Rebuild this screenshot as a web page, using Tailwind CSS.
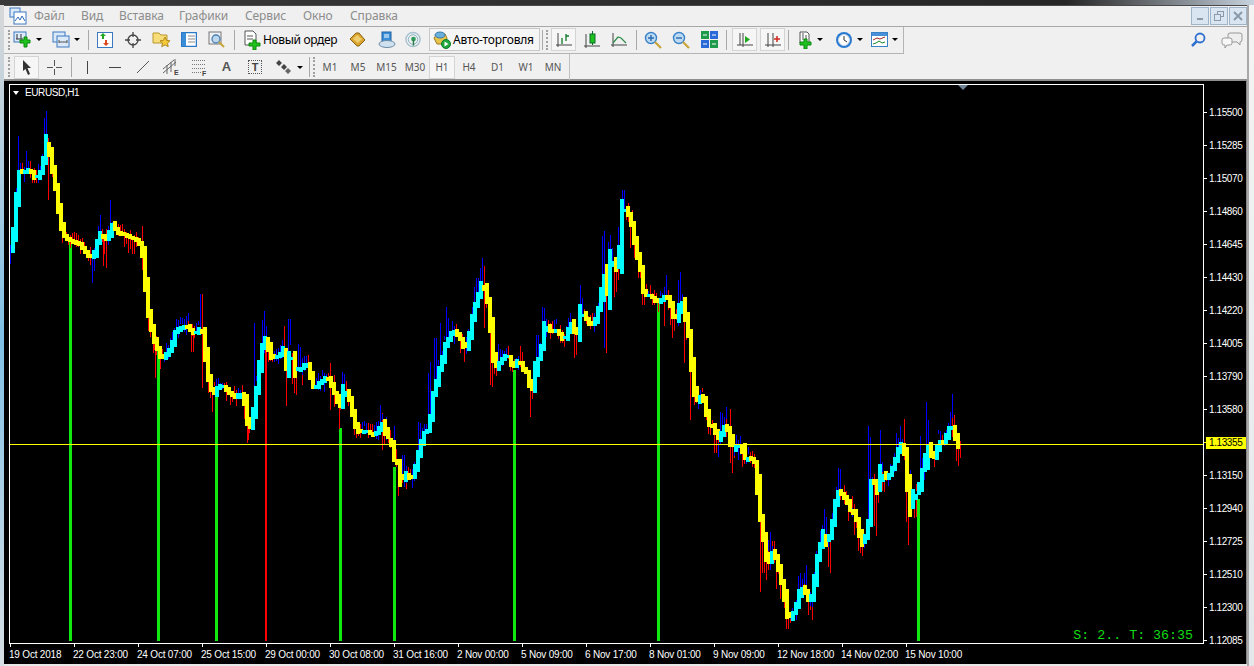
<!DOCTYPE html>
<html lang="en">

<head>
    <meta charset="UTF-8">
    <title>MetaTrader - EURUSD,H1</title>
    <script src="https://cdn.jsdelivr.net/npm/@tailwindcss/browser@4"></script>
</head>

<body class="w-[1254px] h-[666px] overflow-hidden bg-[#dfe6ec] font-['Noto_Sans',sans-serif]">
    <!-- desktop strip above the window -->
    <div class="h-[5px] bg-gradient-to-r from-[#3a3a3a] via-[#262626] via-85% to-[#c8d4e0]"></div>

    <div class="flex h-[661px]">
        <!-- left glass edge -->
        <div class="w-[4px] bg-gradient-to-b from-[#d8d8d8] via-[#7fc0e6] to-[#d8e0e4]"></div>

        <div class="w-[1243px] flex flex-col bg-[#f0f0f0] border-t border-[#4a4a4a]">
            <!-- menu bar -->
            <div class="h-[20px] flex items-center border-b border-[#a8a8a8] box-content relative">
                <svg class="ml-[5px] w-[18px] h-[18px]" viewBox="0 0 18 18">
                    <rect x="1" y="1" width="10" height="9" fill="#dbe9f8" stroke="#3a78c0" />
                    <rect x="5" y="5" width="12" height="12" fill="#fff" stroke="#3a78c0" />
                    <path d="M6 14l3-4 2 3 2-4 3 5" fill="none" stroke="#2b6cb8" />
                </svg>
                <div class="flex ml-[7px] gap-[18px] text-[12px] tracking-[-0.1px] text-[#8c8c8c]">
                    <span class="w-[29px]">Файл</span>
                    <span class="w-[20px]">Вид</span>
                    <span class="w-[42px]">Вставка</span>
                    <span class="w-[48px]">Графики</span>
                    <span class="w-[40px]">Сервис</span>
                    <span class="w-[29px]">Окно</span>
                    <span>Справка</span>
                </div>
                <div class="absolute right-0 top-[1px] flex gap-[1px]">
                    <div class="w-[18px] h-[18px] bg-[#d9e5f1] border border-[#9db4ca] flex items-end justify-center pb-[4px]">
                        <div class="w-[6px] h-[2px] bg-[#8a9aaa]"></div>
                    </div>
                    <div class="w-[18px] h-[18px] bg-[#d9e5f1] border border-[#9db4ca] flex items-center justify-center">
                        <svg class="w-[10px] h-[10px]" viewBox="0 0 10 10" fill="none" stroke="#8a9aaa">
                            <rect x="3.5" y="0.5" width="6" height="5" />
                            <rect x="0.5" y="3.5" width="6" height="6" fill="#d9e5f1" />
                        </svg>
                    </div>
                    <div class="w-[18px] h-[18px] bg-[#d9e5f1] border border-[#9db4ca] flex items-center justify-center">
                        <svg class="w-[10px] h-[10px]" viewBox="0 0 10 10" stroke="#8a9aaa" stroke-width="2">
                            <path d="M1 1l8 8M9 1l-8 8" />
                        </svg>
                    </div>
                </div>
            </div>

            <!-- toolbar 1 -->
            <div class="h-[26px] flex items-center relative">
                <div class="w-[900px] h-[27px] flex items-center border-r border-b border-[#b4b4b4]">
                    <div class="w-[2px] h-[20px] ml-[4px] border-l-2 border-dotted border-[#a0a0a0]"></div>
                    <div class="w-[24px] ml-[1px] flex justify-center">
                        <svg class="w-[20px] h-[18px]" viewBox="0 0 20 18">
                            <rect x="1" y="1" width="12" height="10" fill="#dbe9f8" stroke="#3a78c0" />
                            <path d="M4 3v5M8 3v5M3 8h7" stroke="#333" fill="none" />
                            <path d="M11 6h3v3h3v3h-3v4h-3v-4H7V9h4z" fill="#1fc11f" stroke="#0a8a0a" />
                        </svg>
                    </div>
                    <div class="w-[8px] flex justify-center"><div class="border-x-[3px] border-t-[3px] border-x-transparent border-t-black"></div></div>
                    <div class="w-[24px] ml-[6px] flex justify-center">
                        <svg class="w-[18px] h-[17px]" viewBox="0 0 18 17" fill="#dbe9f8" stroke="#3a78c0">
                            <rect x="1" y="1" width="12" height="10" />
                            <rect x="5" y="5" width="12" height="11" />
                            <path d="M7 9v3M15 9v3M7 11h8" stroke="#555" />
                        </svg>
                    </div>
                    <div class="w-[8px] flex justify-center"><div class="border-x-[3px] border-t-[3px] border-x-transparent border-t-black"></div></div>
                    <div class="w-px h-[20px] ml-[7px] bg-[#a8a8a8]"></div>
                    <div class="w-[28px] ml-[2px] flex justify-center">
                        <svg class="w-[16px] h-[16px]" viewBox="0 0 16 16">
                            <rect x="0.5" y="0.5" width="15" height="15" fill="#fff" stroke="#3a78c0" />
                            <path d="M5 7V4H3l3-3 3 3H7v3z" fill="#1fa81f" />
                            <path d="M10 8v3h2l-3 3-3-3h2V8z" fill="#e0471c" />
                        </svg>
                    </div>
                    <div class="w-[28px] flex justify-center">
                        <svg class="w-[16px] h-[16px]" viewBox="0 0 16 16" fill="none" stroke="#444" stroke-width="1.3">
                            <circle cx="8" cy="8" r="5" />
                            <path d="M8 0v5M8 11v5M0 8h5M11 8h5" />
                        </svg>
                    </div>
                    <div class="w-[28px] flex justify-center">
                        <svg class="w-[19px] h-[17px]" viewBox="0 0 19 17">
                            <path d="M1 2h6l2 2h6v8H1z" fill="#f7dc7a" stroke="#b9962a" />
                            <path d="M13 6l1.600 3.400 3.400.4-2.500 2.400.7 3.500-3.200-1.800-3.200 1.800.7-3.500L8 9.800l3.400-.4z" fill="#f5c83a" stroke="#b08a1e" />
                        </svg>
                    </div>
                    <div class="w-[28px] flex justify-center">
                        <svg class="w-[16px] h-[15px]" viewBox="0 0 16 15">
                            <rect x="0.5" y="0.5" width="15" height="14" rx="1" fill="#fff" stroke="#2a78c8" stroke-width="1.500" />
                            <rect x="1" y="1" width="4" height="13" fill="#3a8ed8" />
                            <path d="M7 4h7M7 7h7M7 10h7" stroke="#8a8a8a" />
                        </svg>
                    </div>
                    <div class="w-[28px] flex justify-center">
                        <svg class="w-[18px] h-[18px]" viewBox="0 0 18 18">
                            <rect x="1" y="1" width="12" height="12" fill="#eef1f4" stroke="#777" />
                            <circle cx="8" cy="8" r="4" fill="#bcd6ee" stroke="#4a7eb0" stroke-width="1.300" />
                            <path d="M11 11l5 5" stroke="#c8a43a" stroke-width="2" />
                        </svg>
                    </div>
                    <div class="w-px h-[20px] ml-[3px] bg-[#a8a8a8]"></div>
                    <svg class="ml-[9px] w-[17px] h-[20px]" viewBox="0 0 17 20">
                        <path d="M1 1h8l3 3v11H1z" fill="#fff" stroke="#555" />
                        <path d="M3 6h6M3 9h6" stroke="#555" />
                        <path d="M9 10h3v3h4v3h-4v4H9v-4H5v-3h4z" fill="#1fc11f" stroke="#0a8a0a" />
                    </svg>
                    <span class="ml-[2px] w-[75px] text-[12px] tracking-[-0.35px] text-black whitespace-nowrap">Новый ордер</span>
                    <div class="w-[38px] flex justify-center">
                        <svg class="w-[17px] h-[15px]" viewBox="0 0 17 15">
                            <path d="M1 7l6-6h3l6 7-6 6H8z" fill="#d9a52e" stroke="#8a6414" />
                            <path d="M4 7l4-4 5 4-4 4z" fill="#f0cd6e" />
                        </svg>
                    </div>
                    <div class="w-[22px] flex justify-center">
                        <svg class="w-[18px] h-[17px]" viewBox="0 0 18 17">
                            <rect x="4" y="1" width="9" height="10" fill="#3a8ed8" stroke="#1e5f9e" />
                            <path d="M6 4h5M6 6h5" stroke="#fff" />
                            <ellipse cx="9" cy="13" rx="8" ry="3.500" fill="#cfe0ee" stroke="#6a8ca8" />
                        </svg>
                    </div>
                    <div class="w-[16px] ml-[7px] flex justify-center">
                        <svg class="w-[17px] h-[17px]" viewBox="0 0 17 17" fill="none">
                            <circle cx="8.500" cy="8.500" r="7.500" stroke="#a8c0d0" stroke-width="1.500" />
                            <circle cx="8.500" cy="8.500" r="5" stroke="#7ab0c0" />
                            <circle cx="9" cy="8" r="2.500" fill="#2d9a5a" />
                            <path d="M9 9v6" stroke="#2d7a4a" stroke-width="1.500" />
                        </svg>
                    </div>
                    <div class="w-[111px] h-[23px] ml-[8px] flex items-center gap-[2px] pl-[3px] border border-[#c8c8c8] bg-[#f6f6f6]">
                        <svg class="w-[18px] h-[18px]" viewBox="0 0 18 18">
                            <path d="M1 7l3-4h8l2 4-2 6H4z" fill="#e8c44a" stroke="#9a7c1e" />
                            <ellipse cx="7" cy="4" rx="5" ry="3" fill="#6ab0dc" stroke="#3a78a8" />
                            <circle cx="13" cy="13" r="4.500" fill="#1ea83c" stroke="#0e7a28" />
                            <path d="M11.500 10.500l4 2.500-4 2.500z" fill="#fff" />
                        </svg>
                        <span class="text-[12px] tracking-[-0.2px] text-black whitespace-nowrap">Авто-торговля</span>
                    </div>
                    <div class="w-px h-[20px] ml-[2px] bg-[#a8a8a8]"></div>
                    <div class="w-[2px] h-[20px] ml-[3px] border-l-2 border-dotted border-[#a0a0a0]"></div>
                    <div class="w-[25px] h-[23px] ml-[3px] flex items-center justify-center border border-[#d4d4d4] bg-[#f6f6f6]">
                        <svg class="w-[16px] h-[16px]" viewBox="0 0 16 16" fill="none">
                            <path d="M2 1v14M0 13h16" stroke="#444" />
                            <path d="M6 12V6M10 9V2M10 4h3" stroke="#0a7a2a" stroke-width="1.300" />
                        </svg>
                    </div>
                    <div class="w-[31px] flex justify-center">
                        <svg class="w-[16px] h-[18px]" viewBox="0 0 16 18" fill="none">
                            <path d="M2 3v14M0 15h16" stroke="#444" />
                            <rect x="6" y="3" width="5" height="9" fill="#1fc11f" stroke="#0a6a2a" />
                            <path d="M8.500 0v3M8.500 12v2" stroke="#0a6a2a" />
                        </svg>
                    </div>
                    <div class="w-[24px] flex justify-center">
                        <svg class="w-[16px] h-[16px]" viewBox="0 0 16 16" fill="none">
                            <path d="M2 1v14M0 13h16" stroke="#444" />
                            <path d="M2 11l5-6 3 1 5 5" stroke="#2d8a4a" stroke-width="1.200" />
                        </svg>
                    </div>
                    <div class="w-px h-[20px] ml-[5px] bg-[#a8a8a8]"></div>
                    <div class="w-[32px] flex justify-center">
                        <svg class="w-[18px] h-[18px]" viewBox="0 0 18 18" fill="none">
                            <circle cx="7" cy="7" r="5.500" fill="#bcdaf2" stroke="#3a82c8" stroke-width="1.400" />
                            <path d="M4 7h6M7 4v6" stroke="#2a6ab0" stroke-width="1.400" />
                            <path d="M11 11l6 6" stroke="#c8a43a" stroke-width="2.200" />
                        </svg>
                    </div>
                    <div class="w-[24px] flex justify-center">
                        <svg class="w-[18px] h-[18px]" viewBox="0 0 18 18" fill="none">
                            <circle cx="7" cy="7" r="5.500" fill="#bcdaf2" stroke="#3a82c8" stroke-width="1.400" />
                            <path d="M4 7h6" stroke="#2a6ab0" stroke-width="1.400" />
                            <path d="M11 11l6 6" stroke="#c8a43a" stroke-width="2.200" />
                        </svg>
                    </div>
                    <div class="w-[32px] flex justify-center">
                        <svg class="w-[17px] h-[17px]" viewBox="0 0 17 17">
                            <rect x="0" y="0" width="8" height="8" fill="#1d9a4a" />
                            <rect x="9" y="0" width="8" height="8" fill="#2a6ad8" />
                            <rect x="0" y="9" width="8" height="8" fill="#2a6ad8" />
                            <rect x="9" y="9" width="8" height="8" fill="#1d9a4a" />
                            <path d="M2 4h4M11 4h4M2 13h4M11 13h4" stroke="#fff" />
                        </svg>
                    </div>
                    <div class="w-px h-[20px] ml-[1px] bg-[#a8a8a8]"></div>
                    <div class="w-[25px] h-[23px] ml-[5px] flex items-center justify-center border border-[#d4d4d4] bg-[#f6f6f6]">
                        <svg class="w-[16px] h-[16px]" viewBox="0 0 16 16" fill="none">
                            <path d="M6 1v14M0 13h16M3 1v12" stroke="#444" />
                            <path d="M8 4l5 3.500-5 3.500z" fill="#1fa81f" />
                        </svg>
                    </div>
                    <div class="w-[25px] h-[23px] ml-[3px] flex items-center justify-center border border-[#d4d4d4] bg-[#f6f6f6]">
                        <svg class="w-[16px] h-[16px]" viewBox="0 0 16 16" fill="none">
                            <path d="M3 1v14M0 13h16M8 1v14" stroke="#444" />
                            <path d="M9 7h6M12 4v6" stroke="#d0281c" stroke-width="1.500" />
                        </svg>
                    </div>
                    <div class="w-px h-[20px] ml-[3px] bg-[#a8a8a8]"></div>
                    <div class="w-[22px] ml-[5px] flex justify-center">
                        <svg class="w-[17px] h-[18px]" viewBox="0 0 17 18">
                            <path d="M3 1h7l2 2v9H3z" fill="#fff" stroke="#555" />
                            <path d="M6 2v7M9 4v5" stroke="#555" />
                            <path d="M7 8h3v3h4v3h-4v4H7v-4H3v-3h4z" fill="#1fc11f" stroke="#0a8a0a" />
                        </svg>
                    </div>
                    <div class="w-[8px] flex justify-center"><div class="border-x-[3px] border-t-[3px] border-x-transparent border-t-black"></div></div>
                    <div class="w-[24px] ml-[8px] flex justify-center">
                        <svg class="w-[18px] h-[18px]" viewBox="0 0 18 18">
                            <circle cx="9" cy="9" r="8" fill="#2a7ad0" />
                            <circle cx="9" cy="9" r="5.500" fill="#fff" stroke="#c8d8e8" />
                            <path d="M9 5v4l3 2" fill="none" stroke="#333" />
                        </svg>
                    </div>
                    <div class="w-[8px] flex justify-center"><div class="border-x-[3px] border-t-[3px] border-x-transparent border-t-black"></div></div>
                    <div class="w-[18px] ml-[6px] flex justify-center">
                        <svg class="w-[17px] h-[15px]" viewBox="0 0 17 15">
                            <rect x="0.500" y="0.500" width="16" height="14" fill="#fff" stroke="#3a82c8" />
                            <rect x="1" y="1" width="15" height="3" fill="#4a90d8" />
                            <path d="M2 8l4-2 3 1 5-2" fill="none" stroke="#a02a1a" />
                            <path d="M2 12l3-1 3-2 3 2 3-1" fill="none" stroke="#1a8a2a" />
                        </svg>
                    </div>
                    <div class="w-[8px] ml-[3px] flex justify-center"><div class="border-x-[3px] border-t-[3px] border-x-transparent border-t-black"></div></div>
                </div>
                <svg class="absolute left-[1186px] top-[5px] w-[16px] h-[16px]" viewBox="0 0 16 16" fill="none">
                    <circle cx="10" cy="6" r="4.500" stroke="#2f6fd0" stroke-width="1.800" />
                    <path d="M6.500 9.500L2 14" stroke="#2f6fd0" stroke-width="2.500" />
                </svg>
                <svg class="absolute left-[1217px] top-[5px] w-[22px] h-[17px]" viewBox="0 0 22 17">
                    <path d="M9 1h10q2 0 2 2v5q0 2-2 2v3l-3-3H9q-2 0-2-2V3q0-2 2-2z" fill="#eee" stroke="#999" />
                    <path d="M3 6h6q2 0 2 2v3q0 2-2 2H6l-2 3v-3H3q-2 0-2-2V8q0-2 2-2z" fill="#f8f8f8" stroke="#999" />
                </svg>
            </div>

            <!-- toolbar 2 -->
            <div class="h-[24px] mt-[2px] flex items-center border-b-2 border-[#8e8e8e] box-content text-[#555]">
                <div class="w-[2px] h-[20px] ml-[4px] border-l-2 border-dotted border-[#a0a0a0]"></div>
                <div class="w-[25px] h-[23px] ml-[4px] flex items-center justify-center border border-[#d4d4d4] bg-[#f6f6f6]">
                    <svg class="w-[10px] h-[15px]" viewBox="0 0 10 15"><path d="M1 0l8 8H5.500L8 14l-2 1-2.500-6L1 11z" fill="#333" /></svg>
                </div>
                <div class="w-[28px] ml-[1px] flex justify-center">
                    <svg class="w-[15px] h-[15px]" viewBox="0 0 15 15" stroke="#555"><path d="M7.500 0v6M7.500 9v6M0 7.500h6M9 7.500h6" /></svg>
                </div>
                <div class="w-px h-[20px] ml-[3px] bg-[#a8a8a8]"></div>
                <div class="w-[28px] ml-[1px] flex justify-center"><div class="w-px h-[13px] bg-[#444]"></div></div>
                <div class="w-[28px] flex justify-center"><div class="w-[12px] h-px bg-[#444]"></div></div>
                <div class="w-[28px] flex justify-center">
                    <svg class="w-[14px] h-[14px]" viewBox="0 0 14 14"><path d="M1 13L13 1" stroke="#555" /></svg>
                </div>
                <div class="w-[28px] flex justify-center">
                    <svg class="w-[18px] h-[18px]" viewBox="0 0 18 18" fill="none" stroke="#666">
                        <path d="M1 11L12 2M1 15L14 4M5 16V7M9 14V4M13 8V1" />
                        <text x="12" y="17" font-size="7" font-weight="700" fill="#444" stroke="none" font-family="Liberation Sans">E</text>
                    </svg>
                </div>
                <div class="w-[28px] flex justify-center">
                    <svg class="w-[18px] h-[18px]" viewBox="0 0 18 18" fill="none" stroke="#777" stroke-dasharray="1 1">
                        <path d="M2 2.500h14M2 6.500h14M2 10.500h14M2 14.500h9" />
                        <text x="12" y="18" font-size="7" font-weight="700" fill="#444" stroke="none" stroke-dasharray="none" font-family="Liberation Sans">F</text>
                    </svg>
                </div>
                <div class="w-[27px] flex justify-center font-['Liberation_Sans',sans-serif] font-bold text-[13px] text-[#555]">A</div>
                <div class="w-[30px] flex justify-center">
                    <div class="w-[14px] h-[14px] border border-dotted border-[#555] flex items-center justify-center font-['Liberation_Sans',sans-serif] font-bold text-[11px] text-[#444] leading-none">T</div>
                </div>
                <div class="w-[26px] flex justify-center">
                    <svg class="w-[16px] h-[14px]" viewBox="0 0 16 14" fill="#444">
                        <path d="M4 0l3 3-3 3-3-3zM9 4l3 3-3 3-3-3z" />
                        <path d="M13 8l3 3-3 3-3-3z" fill="#666" />
                    </svg>
                </div>
                <div class="w-[8px] flex justify-center"><div class="border-x-[3px] border-t-[3px] border-x-transparent border-t-black"></div></div>
                <div class="w-px h-[20px] ml-[5px] bg-[#a8a8a8]"></div>
                <div class="w-[2px] h-[20px] ml-[3px] border-l-2 border-dotted border-[#a0a0a0]"></div>
                <div class="flex items-center text-[10px] ml-[1px]">
                    <div class="w-[28px] text-center">M1</div>
                    <div class="w-[28px] text-center">M5</div>
                    <div class="w-[29px] text-center">M15</div>
                    <div class="w-[28px] text-center">M30</div>
                    <div class="w-[26px] h-[23px] flex items-center justify-center border border-[#d4d4d4] bg-[#f6f6f6]">H1</div>
                    <div class="w-[28px] text-center">H4</div>
                    <div class="w-[29px] text-center">D1</div>
                    <div class="w-[28px] text-center">W1</div>
                    <div class="w-[26px] text-center">MN</div>
                </div>
                <div class="w-px h-[26px] ml-[3px] bg-[#c0c0c0]"></div>
            </div>

            <!-- chart panel -->
            <div class="flex-1 flex bg-black pt-[3px] pl-[5px] border-r border-[#888] font-['Liberation_Sans',sans-serif]">
                <div class="w-[1195px] flex flex-col">
                    <div class="relative w-[1195px] h-[560px] border border-white">
                        <svg id="chart" class="absolute left-0 top-0 overflow-visible" width="1193" height="558" viewBox="10 85 1193 558" shape-rendering="crispEdges"></svg>
                        <div class="absolute left-[3px] top-[2px] flex items-center gap-[6px] text-[10px] tracking-[-0.4px] leading-[12px] text-white">
                            <div class="border-x-[3.500px] border-t-[4px] border-x-transparent border-t-white"></div>
                            <span>EURUSD,H1</span>
                        </div>
                        <div class="absolute left-[948px] top-0 border-x-[5px] border-t-[5px] border-x-transparent border-t-[#6f8397]"></div>
                        <div class="absolute right-[10px] bottom-0 font-['Liberation_Mono',monospace] text-[13.300px] leading-[14px] text-[#12dc12] whitespace-pre">S: 2.. T: 36:35</div>
                    </div>
                    <div class="grid grid-cols-[repeat(15,64px)] text-[10px] tracking-[-0.2px] leading-[12px] text-white whitespace-nowrap">
                        <div><div class="w-px h-[3px] ml-px bg-white"></div><div class="mt-[2px]">19 Oct 2018</div></div>
                        <div><div class="w-px h-[3px] ml-px bg-white"></div><div class="mt-[2px]">22 Oct 23:00</div></div>
                        <div><div class="w-px h-[3px] ml-px bg-white"></div><div class="mt-[2px]">24 Oct 07:00</div></div>
                        <div><div class="w-px h-[3px] ml-px bg-white"></div><div class="mt-[2px]">25 Oct 15:00</div></div>
                        <div><div class="w-px h-[3px] ml-px bg-white"></div><div class="mt-[2px]">29 Oct 00:00</div></div>
                        <div><div class="w-px h-[3px] ml-px bg-white"></div><div class="mt-[2px]">30 Oct 08:00</div></div>
                        <div><div class="w-px h-[3px] ml-px bg-white"></div><div class="mt-[2px]">31 Oct 16:00</div></div>
                        <div><div class="w-px h-[3px] ml-px bg-white"></div><div class="mt-[2px]">2 Nov 00:00</div></div>
                        <div><div class="w-px h-[3px] ml-px bg-white"></div><div class="mt-[2px]">5 Nov 09:00</div></div>
                        <div><div class="w-px h-[3px] ml-px bg-white"></div><div class="mt-[2px]">6 Nov 17:00</div></div>
                        <div><div class="w-px h-[3px] ml-px bg-white"></div><div class="mt-[2px]">8 Nov 01:00</div></div>
                        <div><div class="w-px h-[3px] ml-px bg-white"></div><div class="mt-[2px]">9 Nov 09:00</div></div>
                        <div><div class="w-px h-[3px] ml-px bg-white"></div><div class="mt-[2px]">12 Nov 18:00</div></div>
                        <div><div class="w-px h-[3px] ml-px bg-white"></div><div class="mt-[2px]">14 Nov 02:00</div></div>
                        <div><div class="w-px h-[3px] ml-px bg-white"></div><div class="mt-[2px]">15 Nov 10:00</div></div>
                    </div>
                </div>
                <!-- price axis -->
                <div class="w-[43px] h-[574px] pt-[12px] overflow-hidden text-[10px] tracking-[-0.4px] leading-[12px] text-white">
                    <div class="h-[33px] flex items-center"><div class="w-[3px] h-px bg-white"></div><span class="ml-[2px]">1.15500</span></div>
                    <div class="h-[33px] flex items-center"><div class="w-[3px] h-px bg-white"></div><span class="ml-[2px]">1.15285</span></div>
                    <div class="h-[33px] flex items-center"><div class="w-[3px] h-px bg-white"></div><span class="ml-[2px]">1.15070</span></div>
                    <div class="h-[33px] flex items-center"><div class="w-[3px] h-px bg-white"></div><span class="ml-[2px]">1.14860</span></div>
                    <div class="h-[33px] flex items-center"><div class="w-[3px] h-px bg-white"></div><span class="ml-[2px]">1.14645</span></div>
                    <div class="h-[33px] flex items-center"><div class="w-[3px] h-px bg-white"></div><span class="ml-[2px]">1.14430</span></div>
                    <div class="h-[33px] flex items-center"><div class="w-[3px] h-px bg-white"></div><span class="ml-[2px]">1.14220</span></div>
                    <div class="h-[33px] flex items-center"><div class="w-[3px] h-px bg-white"></div><span class="ml-[2px]">1.14005</span></div>
                    <div class="h-[33px] flex items-center"><div class="w-[3px] h-px bg-white"></div><span class="ml-[2px]">1.13790</span></div>
                    <div class="h-[33px] flex items-center"><div class="w-[3px] h-px bg-white"></div><span class="ml-[2px]">1.13580</span></div>
                    <div class="h-[33px] flex items-center"><div class="w-[2px] h-px bg-[#ffff00]"></div><span class="w-[40px] h-[12px] pl-[3px] bg-[#ffff00] text-black">1.13355</span></div>
                    <div class="h-[33px] flex items-center"><div class="w-[3px] h-px bg-white"></div><span class="ml-[2px]">1.13150</span></div>
                    <div class="h-[33px] flex items-center"><div class="w-[3px] h-px bg-white"></div><span class="ml-[2px]">1.12940</span></div>
                    <div class="h-[33px] flex items-center"><div class="w-[3px] h-px bg-white"></div><span class="ml-[2px]">1.12725</span></div>
                    <div class="h-[33px] flex items-center"><div class="w-[3px] h-px bg-white"></div><span class="ml-[2px]">1.12510</span></div>
                    <div class="h-[33px] flex items-center"><div class="w-[3px] h-px bg-white"></div><span class="ml-[2px]">1.12300</span></div>
                    <div class="h-[33px] flex items-center"><div class="w-[3px] h-px bg-white"></div><span class="ml-[2px]">1.12085</span></div>
                </div>
            </div>
            <div class="h-[2px] bg-[#e8e8e8]"></div>
        </div>

        <!-- right glass edge -->
        <div class="w-[7px] bg-gradient-to-b from-[#f4f4f4] to-[#e4e8ea] border-l-2 border-[#a8a8a8]"></div>
    </div>

    <script>
        // close prices as screen points, read off the chart
        const pts = [[10,247],[12,240],[13,228],[15,205],[18,170],[21,172],[24,172],[28,169],[31,172],[34,178],[36,178],[38,174],[41,170],[44,150],[46,135],[48,148],[50,160],[53,178],[56,195],[58,212],[61,228],[63,235],[66,238],[70,240],[74,242],[78,243],[81,247],[85,252],[88,256],[93,256],[95,245],[97,240],[100,232],[104,238],[107,240],[111,222],[114,228],[118,233],[124,234],[129,237],[133,238],[137,240],[141,247],[143,265],[145,290],[147,310],[150,325],[152,335],[155,345],[158,352],[161,360],[163,357],[167,352],[171,345],[174,332],[178,328],[182,326],[186,325],[190,330],[194,333],[198,330],[200,325],[203,335],[205,360],[207,375],[210,388],[213,395],[216,388],[220,385],[224,386],[228,392],[232,395],[236,398],[239,392],[243,395],[245,412],[248,430],[251,425],[254,400],[257,380],[260,352],[263,340],[266,335],[268,350],[271,357],[275,356],[279,355],[283,347],[285,375],[288,358],[290,345],[292,358],[295,375],[298,368],[302,368],[305,362],[308,365],[311,385],[314,388],[318,383],[322,380],[326,376],[329,380],[333,392],[336,395],[338,408],[341,405],[343,385],[346,392],[349,400],[352,415],[355,427],[358,432],[362,431],[367,431],[371,434],[374,434],[378,430],[381,420],[384,428],[386,440],[389,436],[391,445],[393,460],[395,458],[398,465],[400,485],[403,478],[406,472],[409,478],[413,476],[416,460],[419,447],[423,432],[427,430],[430,415],[432,395],[435,385],[438,370],[441,362],[444,345],[447,340],[449,335],[452,330],[455,331],[458,337],[461,340],[464,350],[467,345],[470,325],[473,310],[476,300],[479,290],[482,278],[485,295],[488,305],[491,345],[494,370],[497,365],[500,360],[505,355],[508,356],[511,365],[514,366],[517,360],[520,363],[523,370],[526,372],[528,380],[530,393],[533,387],[535,362],[538,358],[541,345],[544,322],[547,327],[550,331],[556,330],[560,335],[563,340],[566,335],[570,320],[573,328],[576,340],[578,325],[580,305],[583,315],[587,320],[590,325],[594,322],[597,310],[600,300],[603,265],[605,285],[606,308],[608,280],[610,250],[613,262],[616,270],[618,272],[620,220],[622,200],[625,210],[628,215],[631,225],[634,243],[637,258],[640,270],[642,290],[645,295],[649,295],[653,298],[656,302],[660,300],[663,296],[666,296],[669,302],[672,315],[675,320],[678,312],[680,295],[683,305],[685,320],[688,335],[691,370],[694,395],[696,402],[699,395],[702,397],[705,410],[708,425],[711,424],[714,430],[717,440],[720,435],[723,425],[726,427],[729,435],[731,455],[733,445],[737,445],[741,444],[743,460],[746,457],[750,458],[754,462],[756,475],[758,510],[760,520],[763,540],[766,560],[769,562],[771,550],[774,555],[777,565],[780,580],[783,590],[785,610],[788,620],[791,615],[794,610],[797,600],[800,585],[804,590],[807,600],[810,600],[813,585],[815,565],[818,550],[821,540],[823,530],[826,545],[829,535],[832,520],[834,505],[837,490],[842,495],[846,500],[849,510],[852,510],[856,520],[859,535],[862,545],[865,535],[868,520],[870,480],[873,480],[876,490],[878,495],[880,465],[883,475],[886,478],[890,472],[893,465],[896,455],[899,445],[902,442],[905,460],[907,490],[910,515],[913,490],[916,495],[918,490],[921,470],[924,468],[926,440],[929,448],[932,460],[935,455],[938,440],[941,442],[944,442],[947,430],[950,425],[953,428],[956,445],[959,448]];

        // long wicks: [x, far end]
        const blueWicks = [[18,136],[26,151],[44,118],[46,111],[92,283],[94,270],[100,215],[110,200],[188,313],[200,294],[254,323],[262,320],[264,311],[288,319],[290,319],[298,344],[300,347],[342,372],[344,374],[380,405],[386,417],[394,426],[402,455],[404,455],[418,422],[420,423],[424,424],[428,373],[430,362],[434,338],[436,338],[440,323],[446,307],[448,318],[474,287],[476,278],[478,278],[480,268],[482,258],[498,344],[500,349],[536,335],[538,335],[542,307],[544,308],[580,285],[582,298],[602,236],[604,231],[604,348],[608,242],[610,235],[612,248],[618,227],[620,199],[622,190],[624,190],[666,275],[678,280],[680,272],[718,457],[720,412],[722,413],[726,407],[740,437],[768,540],[770,532],[798,576],[800,573],[804,573],[806,565],[820,531],[822,525],[824,509],[826,517],[838,468],[840,469],[868,426],[870,437],[880,430],[896,433],[900,426],[910,470],[920,436],[922,458],[926,402],[928,420],[940,432],[950,412],[952,394]];
        const redWicks = [[48,138],[48,200],[103,265],[106,268],[142,226],[142,260],[153,353],[155,378],[202,294],[202,388],[191,352],[193,352],[212,412],[247,443],[249,433],[284,326],[286,406],[292,384],[294,393],[296,395],[302,385],[330,363],[330,410],[334,375],[334,407],[339,429],[346,383],[382,413],[382,450],[396,449],[398,496],[406,489],[484,266],[484,328],[488,297],[490,385],[492,387],[520,346],[522,352],[530,417],[532,399],[574,358],[576,355],[606,280],[606,353],[614,297],[616,292],[628,203],[630,248],[632,210],[634,258],[638,278],[644,305],[664,287],[664,326],[670,325],[672,338],[674,331],[684,362],[686,340],[688,328],[690,420],[692,390],[714,453],[716,453],[724,417],[730,409],[730,463],[732,473],[734,458],[736,438],[760,592],[762,573],[764,573],[766,580],[772,541],[774,541],[776,589],[780,599],[784,601],[786,629],[788,629],[790,623],[808,615],[810,610],[812,620],[828,567],[830,573],[844,485],[848,521],[852,496],[854,535],[858,551],[860,553],[862,556],[874,526],[876,536],[882,491],[884,492],[904,419],[906,522],[908,545],[914,518],[916,517],[954,415],[956,461],[958,466],[960,458]];

        // signal bars: [x, top, width, colour]
        const bars = [[70,240,3,'#10e810'],[158,348,3,'#10e810'],[216,388,3,'#10e810'],[266,340,2,'#ff0000'],[340,428,3,'#10e810'],[394,467,3,'#10e810'],[514,370,3,'#10e810'],[658,300,3,'#10e810'],[918,499,3,'#10e810']];

        function closeAt(x) {
            for (let i = 1; i < pts.length; i++) {
                if (x <= pts[i][0]) {
                    const [x0, y0] = pts[i - 1];
                    const [x1, y1] = pts[i];
                    return y0 + (y1 - y0) * (x - x0) / (x1 - x0);
                }
            }
            return pts[pts.length - 1][1];
        }

        function rect(x, y, w, h, fill) {
            return `<rect x="${x}" y="${Math.round(y)}" width="${w}" height="${Math.max(1, Math.round(h))}" fill="${fill}"/>`;
        }

        let out = '';
        let seed = 7;
        const rnd = () => (seed = (seed * 16807) % 2147483647) / 2147483647;

        for (const [x, top, w, c] of bars) {
            out += rect(x - 1, top, w, 641 - top, c);
        }
        for (const [x, y] of blueWicks) {
            const c = closeAt(x);
            out += rect(x, Math.min(y, c), 1, Math.abs(y - c), '#0000ff');
        }
        for (const [x, y] of redWicks) {
            const c = closeAt(x);
            out += rect(x, Math.min(y, c), 1, Math.abs(y - c), '#ff0000');
        }

        // short wicks every bar, both ends
        for (let x = 10; x <= 960; x += 2) {
            const c = closeAt(x);
            const up = closeAt(x) <= closeAt(Math.max(10, x - 3));
            out += rect(x, c - 2 - rnd() * 9, 1, 4 + rnd() * 16, up ? '#0000ff' : '#ff0000');
        }

        // chunky bodies on top, staircase like the reference
        for (let x = 13; x <= 960; x += 3) {
            const open = closeAt(x - 4);
            const close = closeAt(x);
            const up = close <= open;
            const top = Math.min(open, close) - 1;
            out += rect(x - 2, top, 4, Math.abs(close - open) + 3, up ? '#00ffff' : '#ffff00');
        }
        out += rect(10, 444, 1193, 1, '#ffff00');
        document.getElementById('chart').innerHTML = out;
    </script>
</body>

</html>
